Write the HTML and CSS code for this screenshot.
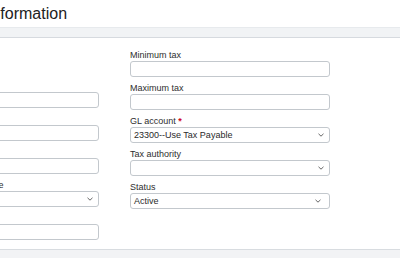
FILE: index.html
```html
<!DOCTYPE html>
<html lang="en">
<head>
<meta charset="utf-8">
<title>Tax Information</title>
<link rel="stylesheet" href="styles.css">
</head>
<body>
<div class="page">
  <h1 class="title">Information</h1>
  <div class="band"></div>
  <div class="content">
    <div class="col col-left">
      <div class="field">
        <label class="label">Rate</label>
        <div class="input"></div>
      </div>
      <div class="field">
        <label class="label">Tax code</label>
        <div class="input"></div>
      </div>
      <div class="field">
        <label class="label">Tax return line accounts</label>
        <div class="input"></div>
      </div>
      <div class="field">
        <label class="label">Purchase tax account rate</label>
        <div class="input select"><span class="value"></span><svg class="chev" width="6" height="4" viewBox="0 0 6 4"><path d="M0.5 0.8 L3 3.2 L5.5 0.8" fill="none" stroke="#666" stroke-width="1"/></svg></div>
      </div>
      <div class="field">
        <label class="label">Notes</label>
        <div class="input"></div>
      </div>
    </div>
    <div class="col col-right">
      <div class="field">
        <label class="label">Minimum tax</label>
        <div class="input"></div>
      </div>
      <div class="field">
        <label class="label">Maximum tax</label>
        <div class="input"></div>
      </div>
      <div class="field">
        <label class="label">GL account <span class="req">*</span></label>
        <div class="input select"><span class="value">23300--Use Tax Payable</span><svg class="chev" width="6" height="4" viewBox="0 0 6 4"><path d="M0.5 0.8 L3 3.2 L5.5 0.8" fill="none" stroke="#666" stroke-width="1"/></svg></div>
      </div>
      <div class="field">
        <label class="label">Tax authority</label>
        <div class="input select"><span class="value"></span><svg class="chev" width="6" height="4" viewBox="0 0 6 4"><path d="M0.5 0.8 L3 3.2 L5.5 0.8" fill="none" stroke="#666" stroke-width="1"/></svg></div>
      </div>
      <div class="field">
        <label class="label">Status</label>
        <div class="input select status"><span class="value">Active</span><svg class="chev" width="6" height="4" viewBox="0 0 6 4"><path d="M0.5 0.8 L3 3.2 L5.5 0.8" fill="none" stroke="#666" stroke-width="1"/></svg></div>
      </div>
    </div>
  </div>
  <div class="footer"></div>
</div>
</body>
</html>
```

FILE: styles.css
```css
html, body {
  margin: 0;
  padding: 0;
  background: #ffffff;
  overflow: hidden;
}

body {
  font-family: "Liberation Sans", Arial, sans-serif;
  color: #333;
}

.page {
  margin-left: -101px;
  width: 520px;
}

.title {
  margin: 0;
  height: 27px;
  padding-left: 88px;
  font-size: 16px;
  font-weight: normal;
  line-height: 27px;
  color: #222;
}

.band {
  height: 9px;
  background: #f1f3f5;
  border-top: 1px solid #e7eaed;
  border-bottom: 1px solid #d6dadf;
}

.content {
  display: grid;
  grid-template-columns: 200px 200px;
  column-gap: 31px;
  height: 211px;
  box-sizing: border-box;
  padding-top: 11px;
}

.col-left {
  padding-top: 31px;
}

.field {
  margin-bottom: 5px;
}

.label {
  display: block;
  font-size: 9px;
  line-height: 12px;
  color: #2e2e2e;
  white-space: nowrap;
}

.req {
  color: #d0021b;
  font-weight: bold;
}

.input {
  box-sizing: border-box;
  height: 16px;
  border: 1px solid #c3c8cd;
  border-radius: 3px;
  background: #fff;
}

.select {
  display: flex;
  align-items: center;
  justify-content: space-between;
  padding: 0 5px 0 3px;
}

.status {
  padding-right: 8px;
}

.value {
  font-size: 9px;
  line-height: 14px;
  color: #2a2a2a;
}

.chev {
  display: block;
}

.footer {
  height: 9px;
  background: #f2f3f5;
  border-top: 1px solid #d8dce0;
}
```
